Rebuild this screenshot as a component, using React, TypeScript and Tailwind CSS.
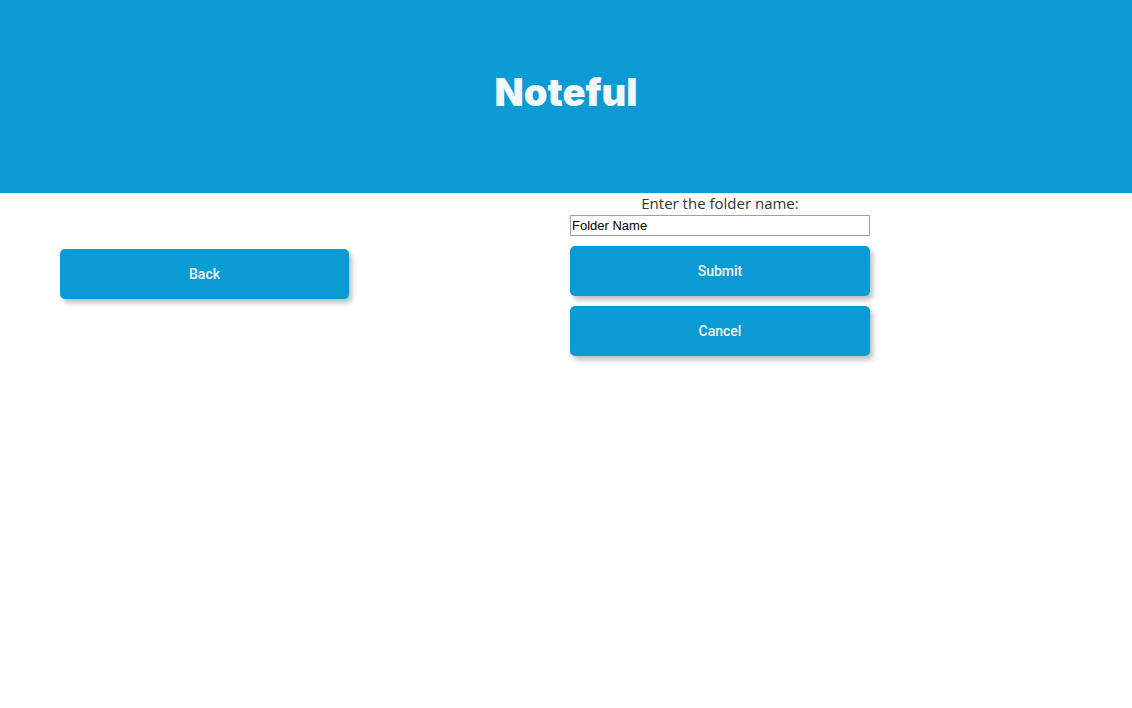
export default function App() {
    return (
        <div className="min-h-[708px] bg-white font-['Lato',sans-serif]">
            <header className="flex h-[193px] justify-center bg-[#0a9ad4] pt-[70px]">
                <h1 className="font-['Inter',sans-serif] text-[38px] font-black leading-[44px] tracking-[0px] text-[#f2f8fc]">Noteful</h1>
            </header>
            <div className="flex">
                <nav className="w-[570px] pl-[60px] pt-[56px]">
                    <button className="h-[50px] w-[289px] rounded-[5px] bg-[#0a9ad4] font-['Roboto',sans-serif] text-[14px] font-medium text-[#f2f8fc] shadow-[3px_4px_5px_rgba(0,0,0,0.25)]">
                        Back
                    </button>
                </nav>
                <main className="flex w-[300px] flex-col">
                    <label className="mb-[2px] text-center font-['Open_Sans',sans-serif] text-[15px] leading-[20px] text-[#333]">
                        Enter the folder name:
                    </label>
                    <input
                        className="h-[21px] border border-[#a0a0a0] px-[1px] font-['Liberation_Sans',sans-serif] text-[13px] text-black outline-none"
                        defaultValue="Folder Name"
                    />
                    <button className="mt-[10px] h-[50px] w-[300px] rounded-[5px] bg-[#0a9ad4] font-['Roboto',sans-serif] text-[14px] font-medium text-[#f2f8fc] shadow-[3px_4px_5px_rgba(0,0,0,0.25)]">
                        Submit
                    </button>
                    <button className="mt-[10px] h-[50px] w-[300px] rounded-[5px] bg-[#0a9ad4] font-['Roboto',sans-serif] text-[14px] font-medium text-[#f2f8fc] shadow-[3px_4px_5px_rgba(0,0,0,0.25)]">
                        Cancel
                    </button>
                </main>
            </div>
        </div>
    )
}
